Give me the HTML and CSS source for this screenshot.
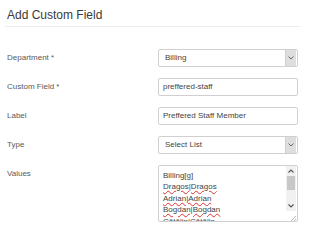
FILE: index.html
```html
<!DOCTYPE html>
<html>
<head>
<meta charset="utf-8">
<link rel="stylesheet" href="styles.css">
</head>
<body>
<div class="page">
  <h2 class="title">Add Custom Field</h2>
  <div class="form">
    <div class="row">
      <div class="label">Department *</div>
      <div class="select"><span class="val">Billing</span><span class="arrow"><svg width="6" height="4" viewBox="0 0 6 4"><path d="M0.5 0.5 L3 3 L5.5 0.5" fill="none" stroke="#666" stroke-width="1"/></svg></span></div>
    </div>
    <div class="row">
      <div class="label">Custom Field *</div>
      <div class="input">preffered-staff</div>
    </div>
    <div class="row">
      <div class="label">Label</div>
      <div class="input">Preffered Staff Member</div>
    </div>
    <div class="row">
      <div class="label">Type</div>
      <div class="select"><span class="val">Select List</span><span class="arrow"><svg width="6" height="4" viewBox="0 0 6 4"><path d="M0.5 0.5 L3 3 L5.5 0.5" fill="none" stroke="#666" stroke-width="1"/></svg></span></div>
    </div>
    <div class="row">
      <div class="label">Values</div>
      <div class="textarea">
        <div class="lines">
          <div>Billing<span class="sp">[g]</span></div>
          <div><span class="sp">Dragos|Dragos</span></div>
          <div><span class="sp">Adrian|Adrian</span></div>
          <div><span class="sp">Bogdan|Bogdan</span></div>
          <div>Cătălin|Cătălin</div>
        </div>
        <div class="sbar">
          <div class="btn"><svg width="6" height="4" viewBox="0 0 6 4"><path d="M0.5 3.5 L3 1 L5.5 3.5" fill="none" stroke="#555" stroke-width="1.1"/></svg></div>
          <div class="track"><div class="thumb"></div></div>
          <div class="btn"><svg width="6" height="4" viewBox="0 0 6 4"><path d="M0.5 0.5 L3 3 L5.5 0.5" fill="none" stroke="#555" stroke-width="1.1"/></svg></div>
          <div class="corner"><svg width="6" height="6" viewBox="0 0 6 6"><path d="M1 6 L6 1 M4 6 L6 4" stroke="#aaa" stroke-width="0.8"/></svg></div>
        </div>
      </div>
    </div>
  </div>
</div>
</body>
</html>
```
FILE: styles.css
```css
html, body {
  margin: 0;
  padding: 0;
  background: #fff;
}
body {
  font-family: "Liberation Sans", Arial, sans-serif;
  width: 300px;
  height: 225px;
  overflow: hidden;
}
.title {
  margin: 0 0 0 5px;
  padding: 6px 0 2px 2px;
  font-size: 12px;
  line-height: 18px;
  font-weight: normal;
  color: #3a3a3a;
  border-bottom: 1px solid #ececec;
}
.form {
  display: flex;
  flex-direction: column;
  gap: 11.5px;
  padding: 22px 2px 0 7px;
}
.row {
  display: flex;
  align-items: flex-start;
}
.label {
  width: 151px;
  flex: none;
  font-size: 8px;
  line-height: 17px;
  color: #5a5a5a;
}
.select, .input, .textarea {
  box-sizing: border-box;
  width: 140px;
  border: 1px solid #d0d0d0;
  border-radius: 2px;
  font-size: 8px;
  color: #444;
  background: #fff;
}
.select {
  height: 17.5px;
  display: flex;
  align-items: stretch;
}
.select .val {
  flex: 1;
  padding-left: 6px;
  line-height: 15.5px;
}
.select .arrow {
  width: 10px;
  margin: 0 1px 0 0;
  background: #dedede;
  border-left: 1px solid #cfcfcf;
  display: flex;
  align-items: center;
  justify-content: center;
}
.input {
  height: 17.5px;
  padding-left: 4px;
  line-height: 15.5px;
}
.textarea {
  height: 57px;
  display: flex;
  overflow: hidden;
}
.lines {
  flex: 1;
  padding: 3.5px 0 0 4px;
  line-height: 11.5px;
  overflow: hidden;
  white-space: nowrap;
}
.sp {
  text-decoration: underline wavy #e03030;
  text-decoration-thickness: 0.8px;
  text-underline-offset: 1px;
}
.sbar {
  width: 10px;
  margin-right: 1px;
  display: flex;
  flex-direction: column;
  background: #f1f1f1;
}
.btn {
  height: 10px;
  display: flex;
  align-items: center;
  justify-content: center;
  flex: none;
}
.track {
  flex: 1;
}
.thumb {
  height: 14px;
  background: #c8c8c8;
  margin: 0 1px;
}
.corner {
  height: 10px;
  flex: none;
  background: #fff;
  display: flex;
  align-items: flex-end;
  justify-content: flex-end;
}
```
